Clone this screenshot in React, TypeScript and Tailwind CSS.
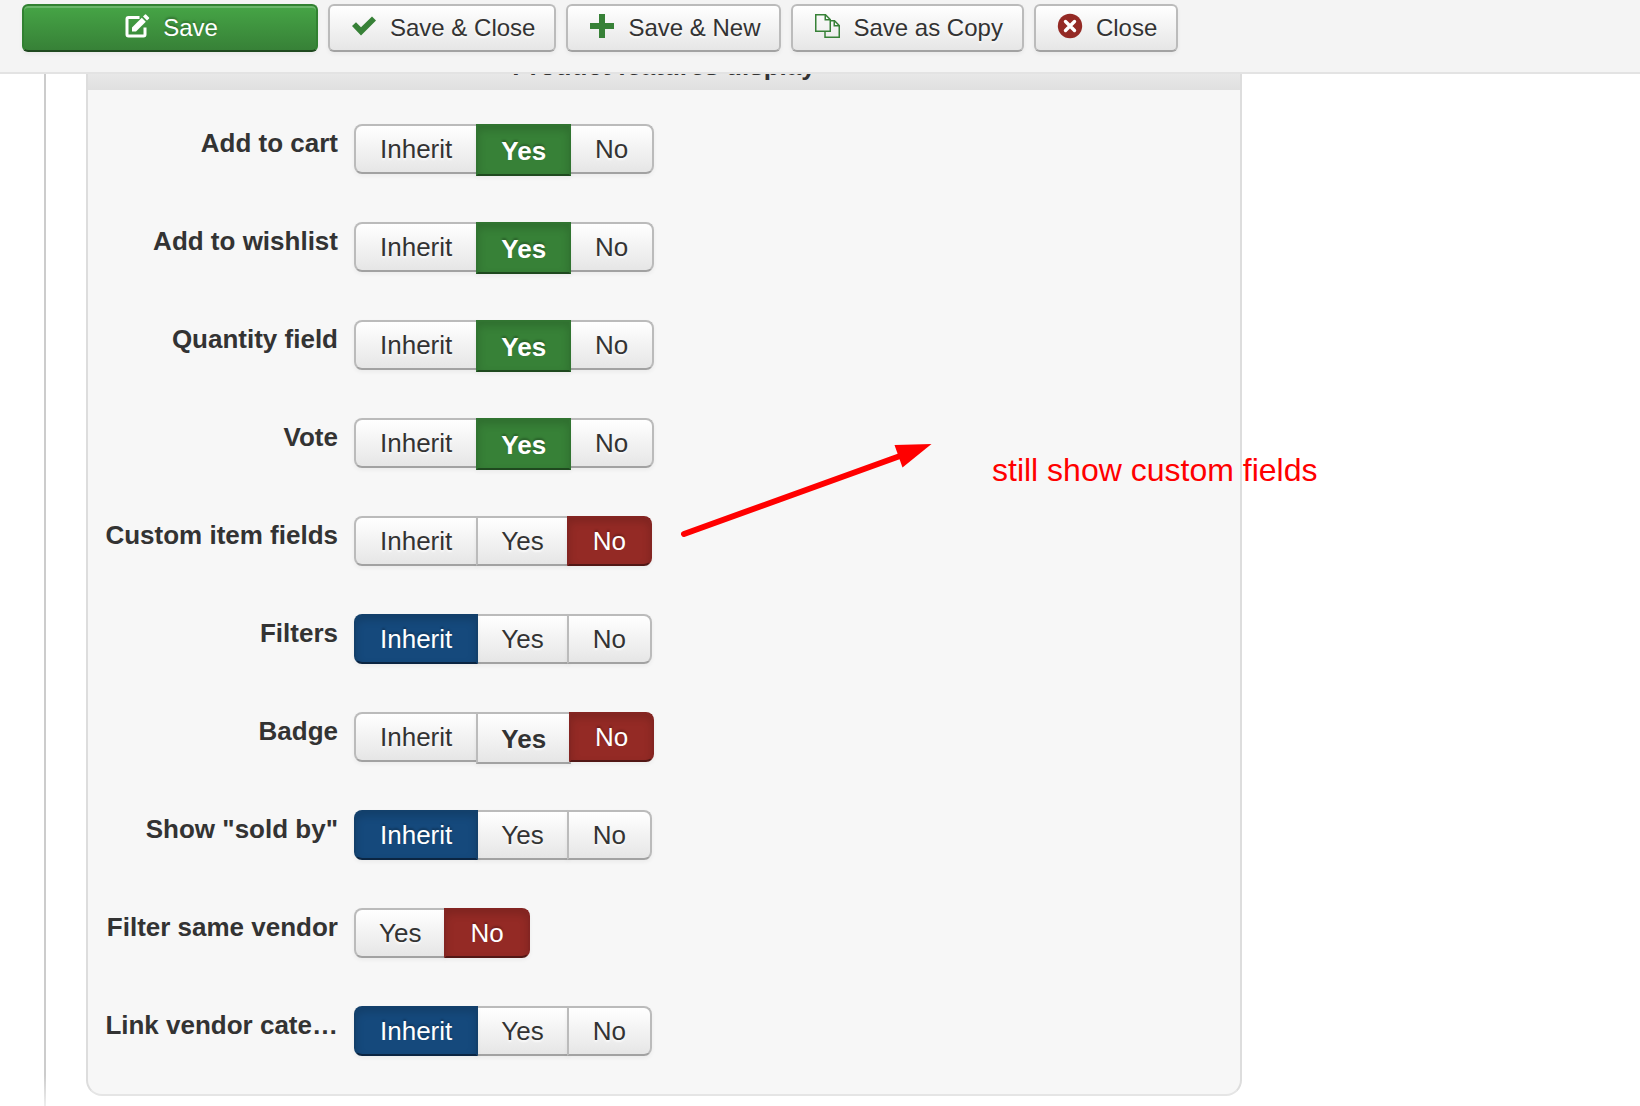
import { useState, type ReactNode } from "react";
import clsx from "clsx";

type Option = "Inherit" | "Yes" | "No";

type Field = {
  name: string;
  label: string;
  options: Option[];
  value: Option;
  preset?: Option;
};

const ALL: Option[] = ["Inherit", "Yes", "No"];

// preset is the stored default, shown in bold
const fields: Field[] = [
  { name: "add_to_cart", label: "Add to cart", options: ALL, value: "Yes", preset: "Yes" },
  { name: "add_to_wishlist", label: "Add to wishlist", options: ALL, value: "Yes", preset: "Yes" },
  { name: "quantity_field", label: "Quantity field", options: ALL, value: "Yes", preset: "Yes" },
  { name: "vote", label: "Vote", options: ALL, value: "Yes", preset: "Yes" },
  { name: "custom_item_fields", label: "Custom item fields", options: ALL, value: "No" },
  { name: "filters", label: "Filters", options: ALL, value: "Inherit" },
  { name: "badge", label: "Badge", options: ALL, value: "No", preset: "Yes" },
  { name: "sold_by", label: 'Show "sold by"', options: ALL, value: "Inherit" },
  { name: "same_vendor", label: "Filter same vendor", options: ["Yes", "No"], value: "No" },
  { name: "link_vendor", label: "Link vendor cate…", options: ALL, value: "Inherit" },
];

const activeStyles: Record<Option, string> = {
  Inherit: "border-[#13406b] border-b-[#0b2542] bg-[#15497c]",
  Yes: "border-[#317431] border-b-[#1f491f] bg-[#378137]",
  No: "border-[#842522] border-b-[#521715] bg-[#942a25]",
};

function RadioGroup({ field }: { field: Field }) {
  const [value, setValue] = useState<Option>(field.value);

  return (
    <div role="radiogroup" aria-labelledby={`${field.name}-label`} className="flex items-start">
      {field.options.map((option) => {
        const bold = field.preset === option;
        return (
          <label
            key={option}
            className={clsx(
              "relative -ml-0.5 cursor-pointer border-2 text-[26px] leading-[46px] first:ml-0 first:rounded-l-lg last:rounded-r-lg",
              option === "Yes" ? "px-[23px]" : "px-6",
              bold && "-mb-0.5 pt-0.5 font-bold",
              value === option
                ? "z-10 text-white shadow-[inset_0_4px_8px_rgba(0,0,0,0.15),0_2px_4px_rgba(0,0,0,0.05)] text-shadow-[0_-2px_2px_rgba(0,0,0,0.25)]"
                : "border-[#bbb] border-b-[#a2a2a2] bg-linear-to-b from-white to-[#e6e6e6] shadow-[0_2px_4px_rgba(0,0,0,0.05)] text-shadow-[0_2px_2px_rgba(255,255,255,0.75)]",
              value === option && activeStyles[option],
            )}
          >
            <input
              type="radio"
              name={field.name}
              value={option}
              checked={value === option}
              onChange={() => setValue(option)}
              className="sr-only"
            />
            {option}
          </label>
        );
      })}
    </div>
  );
}

function ToolbarButton({ icon, primary, children }: { icon: ReactNode; primary?: boolean; children: ReactNode }) {
  return (
    <button
      type="button"
      className={clsx(
        "flex h-12 shrink-0 items-center gap-3 rounded-md border-2 pr-[19px] pl-5 text-[24px] leading-9 whitespace-nowrap",
        primary
          ? "w-[296px] justify-center border-[#318131] border-b-[#1f491f] bg-linear-to-b from-[#46a546] to-[#378137] text-white shadow-[inset_0_2px_0_rgba(255,255,255,0.2),0_2px_4px_rgba(0,0,0,0.05)] text-shadow-[0_-2px_2px_rgba(0,0,0,0.25)]"
          : "border-[#bbb] border-b-[#a2a2a2] bg-linear-to-b from-white to-[#e6e6e6] shadow-[0_2px_4px_rgba(0,0,0,0.05)] text-shadow-[0_2px_2px_rgba(255,255,255,0.75)]",
      )}
    >
      <svg viewBox="0 0 28 28" className="mb-1 size-7 shrink-0" aria-hidden="true">
        {icon}
      </svg>
      <span>{children}</span>
    </button>
  );
}

const editIcon = (
  <>
    <path
      d="M16.5 5.5H5.5Q4 5.5 4 7V22.500Q4 24 5.500 24H20.500Q22 24 22 22.500V15.500"
      fill="none"
      stroke="#fff"
      strokeWidth="3"
    />
    <path d="M9 15.500L18.800 5.700L22.800 9.700L13 19.500H9Z" fill="#fff" />
    <path d="M20 4.500L22 2.500Q22.500 2 23 2.500L26 5.500Q26.500 6 26 6.500L24 8.500Z" fill="#fff" />
  </>
);

const checkIcon = <path d="M2 14L6 10.300L11 15.300L22 4.500L26 8.500L11 23.500Z" fill="#378137" />;

const plusIcon = (
  <path d="M11 2H17V11H26V17H17V26H11V17H2V11H11Z" fill="#378137" />
);

const copyIcon = (
  <g fill="none" stroke="#378137" strokeWidth="1.500">
    <path d="M16.500 19.250H2.750V2.750H12.500L17.250 7.500V19.250Z" />
    <path d="M12.250 2.750V7.750H17.250" />
    <path d="M12 19.250V25.250H26.250V13.500L21.500 8.750H17.250" />
    <path d="M21.250 8.750V13.750H26.250" />
  </g>
);

const closeIcon = (
  <>
    <circle cx="14" cy="14" r="12.200" fill="#942a25" />
    <path d="M9.500 9.500L18.500 18.500M18.500 9.500L9.500 18.500" stroke="#fff" strokeWidth="3.400" strokeLinecap="round" />
  </>
);

export default function App() {
  return (
    <div className="flex min-h-screen flex-col overflow-x-hidden bg-white font-['Liberation_Sans',Arial,sans-serif] text-[#333]">
      <header className="flex gap-2.5 border-b-2 border-[#e3e3e3] bg-[#f4f4f4] px-[22px] pt-1 pb-5">
        <ToolbarButton icon={editIcon} primary>
          Save
        </ToolbarButton>
        <ToolbarButton icon={checkIcon}>Save &amp; Close</ToolbarButton>
        <ToolbarButton icon={plusIcon}>Save &amp; New</ToolbarButton>
        <ToolbarButton icon={copyIcon}>Save as Copy</ToolbarButton>
        <ToolbarButton icon={closeIcon}>Close</ToolbarButton>
      </header>

      <main className="relative flex grow px-11">
        <div className="w-0.5 shrink-0 bg-linear-to-b from-[#ccc] from-97% to-[#eee]" />
        <section className="mb-2.5 ml-10 w-full max-w-[1156px] self-start overflow-hidden rounded-b-2xl border-2 border-t-0 border-[#ddd] border-b-[#e5e5e5] bg-[#f7f7f7]">
          <div className="flex h-4 items-end justify-center overflow-hidden bg-linear-to-b from-[#e8e8e8] to-[#e0e0e0] pb-1.5">
            <h2 className="text-[26px] leading-9 font-bold">Product features display</h2>
          </div>
          <form className="flex flex-col gap-12 pt-[34px] pb-[38px] pl-3.5">
            {fields.map((field) => (
              <div key={field.name} className="flex items-start gap-4">
                <div
                  id={`${field.name}-label`}
                  className="w-[236px] shrink-0 text-right text-[26px] leading-[38px] font-bold whitespace-nowrap"
                >
                  {field.label}
                </div>
                <RadioGroup field={field} />
              </div>
            ))}
          </form>
        </section>

        <div className="pointer-events-none absolute top-[366px] left-[680px] z-20 flex items-start text-[#f00]">
          <svg width="256" height="100" viewBox="0 0 256 100" aria-hidden="true">
            <path d="M4 94L220 16" stroke="currentColor" strokeWidth="6" strokeLinecap="round" />
            <path d="M251.500 4L214.500 5L222.500 27.500Z" fill="currentColor" />
          </svg>
          <p className="mt-3 ml-14 text-[32px] leading-9 whitespace-nowrap">still show custom fields</p>
        </div>
      </main>
    </div>
  );
}
